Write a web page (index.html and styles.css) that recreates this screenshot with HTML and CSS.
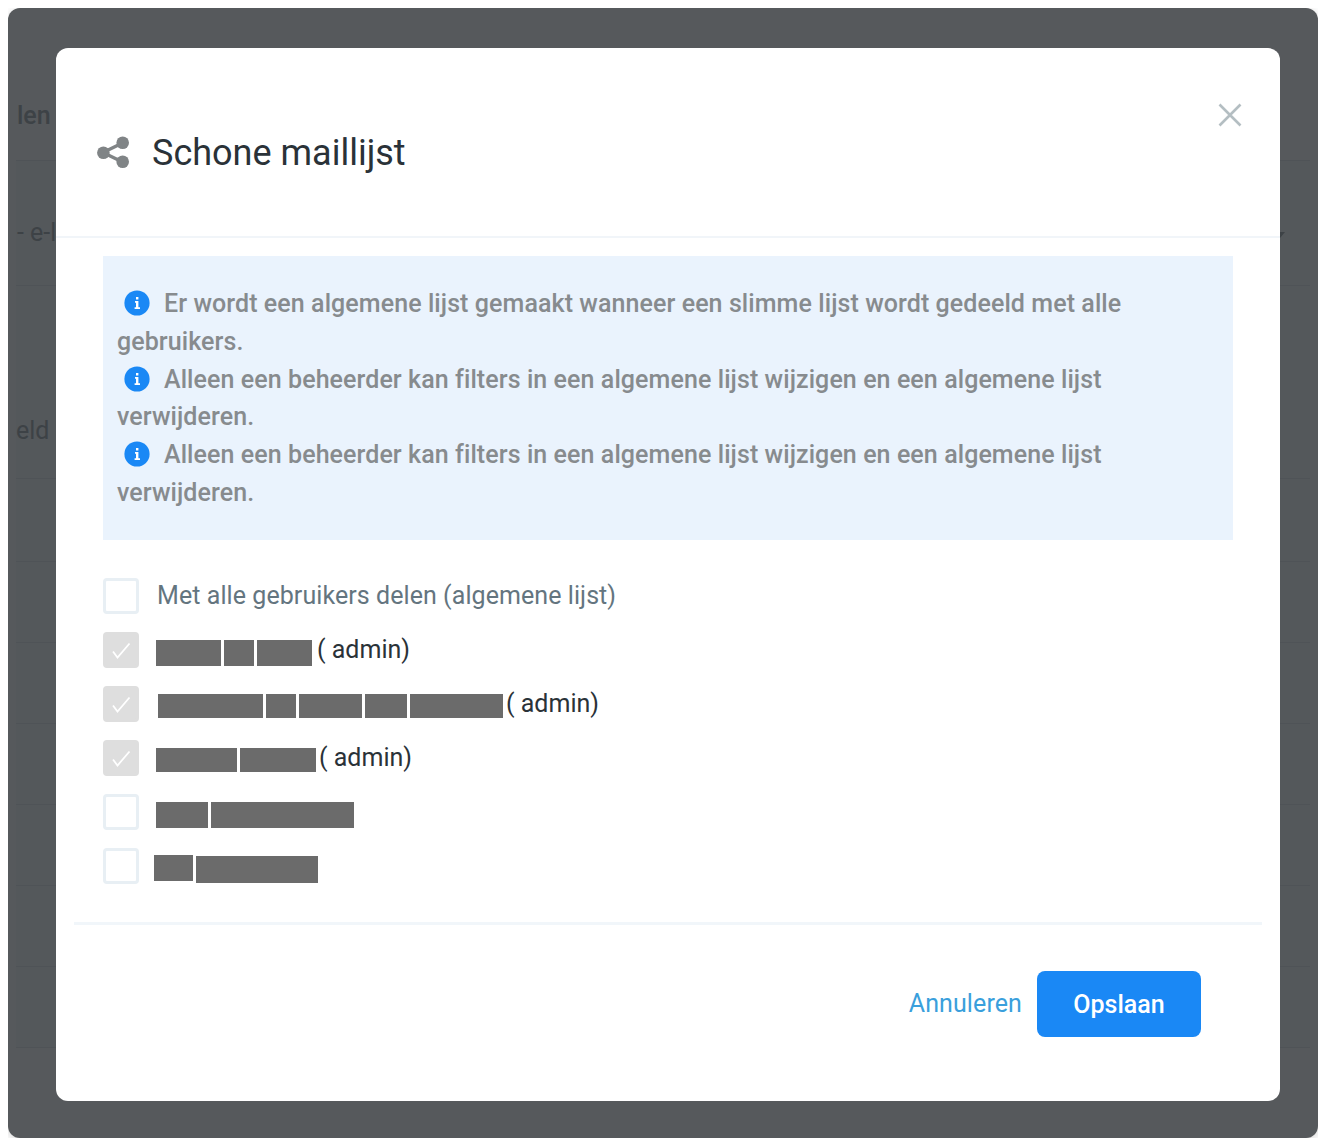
FILE: index.html
```html
<!DOCTYPE html>
<html lang="en">
<head>
  <meta charset="UTF-8" />
  <title>Schone maillijst</title>
  <link rel="stylesheet" href="styles.css">
</head>
<body>

  <div class="window">
    <div class="table">
      <div class="row row-head"><span class="head-text">len</span></div>
      <div class="row row-one"><span>- e-l</span><span class="arrow"></span></div>
      <div class="row row-two"><span>eld</span></div>
      <div class="row row-three"></div>
      <div class="row"></div>
      <div class="row"></div>
      <div class="row"></div>
      <div class="row"></div>
      <div class="row"></div>
      <div class="row"></div>
    </div>

    <div class="modal">
      <button class="close" aria-label="Sluiten">
        <svg width="24" height="24" viewBox="0 0 24 24"><path d="M1.5 1.5 22.5 22.5M22.5 1.5 1.5 22.5" fill="none" stroke="#b4bec2" stroke-width="2.6"/></svg>
      </button>

      <div class="modal-header">
        <svg class="share" width="34" height="34" viewBox="0 0 34 34">
          <path d="M25.5 7 6 16.5 25.5 26" fill="none" stroke="#808486" stroke-width="3.4"/>
          <circle cx="25.7" cy="6.8" r="6.3" fill="#808486"/>
          <circle cx="6.4" cy="16.7" r="6.3" fill="#808486"/>
          <circle cx="25.7" cy="25.7" r="6.3" fill="#808486"/>
        </svg>
        <h1 class="title">Schone maillijst</h1>
      </div>

      <div class="modal-body">
        <div class="info">
          <svg class="info-icon" width="26" height="26" viewBox="0 0 26 26"><circle cx="13" cy="13" r="12.6" fill="#1a88f5"/><path d="M11 11h3.4v6.2H16v1.8h-5.4v-1.8h1.4v-4.4H11zM12 7h2.4v2.4H12z" fill="#fff"/></svg>Er wordt een algemene lijst gemaakt wanneer een slimme lijst wordt gedeeld met alle gebruikers.<br>
          <svg class="info-icon" width="26" height="26" viewBox="0 0 26 26"><circle cx="13" cy="13" r="12.6" fill="#1a88f5"/><path d="M11 11h3.4v6.2H16v1.8h-5.4v-1.8h1.4v-4.4H11zM12 7h2.4v2.4H12z" fill="#fff"/></svg>Alleen een beheerder kan filters in een algemene lijst wijzigen en een algemene lijst verwijderen.<br>
          <svg class="info-icon" width="26" height="26" viewBox="0 0 26 26"><circle cx="13" cy="13" r="12.6" fill="#1a88f5"/><path d="M11 11h3.4v6.2H16v1.8h-5.4v-1.8h1.4v-4.4H11zM12 7h2.4v2.4H12z" fill="#fff"/></svg>Alleen een beheerder kan filters in een algemene lijst wijzigen en een algemene lijst verwijderen.
        </div>

        <div class="users">
          <div class="user">
            <span class="check"></span>
            <span class="label all">Met alle gebruikers delen (algemene lijst)</span>
          </div>
          <div class="user">
            <span class="check checked"><svg width="20" height="20" viewBox="0 0 20 20"><path d="M2 11.5 6.5 17.5 18.5 3.5" fill="none" stroke="#fff" stroke-width="1.8"/></svg></span>
            <span class="names tall">
              <i class="bar w65"></i><i class="bar w30"></i><i class="bar w55"></i>
            </span>
            <span class="label admin first">( admin)</span>
          </div>
          <div class="user">
            <span class="check checked"><svg width="20" height="20" viewBox="0 0 20 20"><path d="M2 11.5 6.5 17.5 18.5 3.5" fill="none" stroke="#fff" stroke-width="1.8"/></svg></span>
            <span class="names short shift-r">
              <i class="bar w105"></i><i class="bar w30"></i><i class="bar w63"></i><i class="bar w42"></i><i class="bar w93"></i>
            </span>
            <span class="label admin">( admin)</span>
          </div>
          <div class="user">
            <span class="check checked"><svg width="20" height="20" viewBox="0 0 20 20"><path d="M2 11.5 6.5 17.5 18.5 3.5" fill="none" stroke="#fff" stroke-width="1.8"/></svg></span>
            <span class="names short">
              <i class="bar w81"></i><i class="bar w76"></i>
            </span>
            <span class="label admin">( admin)</span>
          </div>
          <div class="user">
            <span class="check"></span>
            <span class="names tall">
              <i class="bar w52"></i><i class="bar w143"></i>
            </span>
          </div>
          <div class="user">
            <span class="check"></span>
            <span class="names low shift-l">
              <i class="bar w39 up"></i><i class="bar w122"></i>
            </span>
          </div>
        </div>
      </div>

      <div class="modal-footer">
        <a class="cancel" href="#">Annuleren</a>
        <button class="save">Opslaan</button>
      </div>
    </div>
  </div>

</body>
</html>
```

FILE: styles.css
```css
* {
  box-sizing: border-box;
}

body {
  margin: 8px;
  background: #fff;
  font-family: Roboto, sans-serif;
}

.window {
  position: relative;
  height: 1130px;
  width: 1310px;
  padding: 72px 8px 0;
  background: #56595c;
  border-radius: 12px;
  box-shadow: 0 2px 8px rgba(0, 0, 0, 0.18);
  overflow: hidden;
}

/* table behind the dialog */
.row {
  height: 81px;
  padding-top: 20px;
  background: #54585b;
  border-bottom: 1px solid #4f5357;
  font-size: 25px;
  color: #3d4246;
}

.row-head {
  height: 81px;
  padding: 21px 0 0 1px;
  background: none;
}

.head-text {
  font-weight: 500;
}

.row-one {
  display: flex;
  height: 125px;
  padding: 57px 0 0 1px;
}

.arrow {
  width: 0;
  height: 0;
  margin: 14px 25px 0 auto;
  border-left: 5px solid transparent;
  border-right: 5px solid transparent;
  border-top: 6px solid #3d4246;
}

.row-two {
  height: 193px;
  padding-top: 130px;
}

.row-three {
  height: 83px;
}

/* dialog */
.modal {
  position: absolute;
  top: 40px;
  left: 48px;
  width: 1224px;
  height: 1053px;
  background: #fff;
  border-radius: 12px;
}

.close {
  position: absolute;
  top: 55px;
  right: 38px;
  width: 24px;
  height: 24px;
  padding: 0;
  border: none;
  background: none;
}

.modal-header {
  display: flex;
  align-items: center;
  height: 190px;
  padding: 22px 0 0 41px;
  border-bottom: 2px solid #f1f5f9;
}

.share {
  flex: none;
}

.title {
  margin: 0 0 0 21px;
  font-size: 36px;
  font-weight: 400;
  color: #2a3238;
}

.modal-body {
  padding: 18px 47px 0;
}

.info {
  height: 284px;
  padding: 29px 14px 0;
  background: #eaf3fd;
  font-size: 25px;
  font-weight: 500;
  line-height: 37.8px;
  letter-spacing: 0.08px;
  color: #878b8e;
}

.info-icon {
  margin: 0 14px 0 7px;
  vertical-align: -4px;
}

.users {
  display: flex;
  flex-direction: column;
  gap: 18px;
  margin-top: 38px;
}

.user {
  display: flex;
  align-items: center;
  height: 36px;
}

.check {
  display: flex;
  align-items: center;
  justify-content: center;
  flex: none;
  width: 36px;
  height: 36px;
  border: 3px solid #e8eff4;
  border-radius: 4px;
}

.check.checked {
  background: #dedede;
  border-color: #dedede;
}

.label {
  margin-top: -2px;
  font-size: 25px;
  color: #2a3238;
}

.label.all {
  margin-left: 18px;
  letter-spacing: 0.07px;
  color: #64757f;
}

.label.admin {
  margin-left: 3px;
}

.label.admin.first {
  margin-left: 5px;
}

.names {
  display: flex;
  gap: 3px;
  margin-left: 17px;
}

.names.tall {
  margin-top: 6px;
}

.names.tall .bar {
  height: 26px;
}

.names.short {
  margin-top: 4px;
}

.names.short .bar {
  height: 24px;
}

.names.low {
  margin-top: 7px;
}

.names.shift-r {
  margin-left: 19px;
}

.names.shift-l {
  margin-left: 15px;
}

.bar {
  display: block;
  height: 27px;
  background: #6b6b6b;
}

.bar.up {
  height: 26px;
  margin-top: -1px;
}

.w30 { width: 30px; }
.w39 { width: 39px; }
.w42 { width: 42px; }
.w52 { width: 52px; }
.w55 { width: 55px; }
.w63 { width: 63px; }
.w65 { width: 65px; }
.w76 { width: 76px; }
.w81 { width: 81px; }
.w93 { width: 93px; }
.w105 { width: 105px; }
.w122 { width: 122px; }
.w143 { width: 143px; }

.modal-footer {
  display: flex;
  align-items: flex-start;
  justify-content: flex-end;
  gap: 15px;
  margin: 38px 18px 0;
  padding: 46px 61px 0 0;
  border-top: 3px solid #f1f6fa;
}

.cancel {
  font-size: 25px;
  line-height: 66px;
  letter-spacing: 0.1px;
  color: #3a9fdc;
  text-decoration: none;
}

.save {
  width: 164px;
  height: 66px;
  border: none;
  border-radius: 8px;
  background: #1a88f5;
  color: #fff;
  font-family: Roboto, sans-serif;
  font-size: 25px;
  font-weight: 500;
}
```
